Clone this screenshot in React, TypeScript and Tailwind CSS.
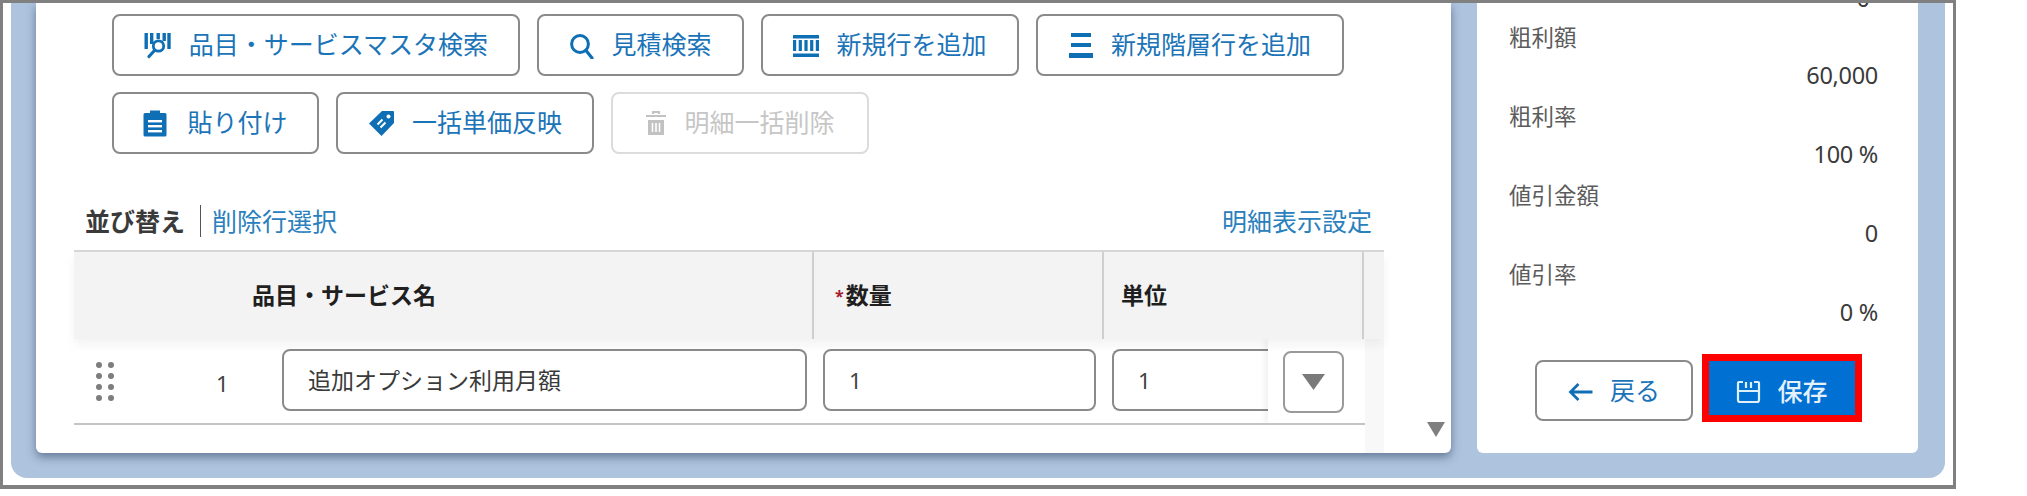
import React from "react";

const blue = "#0f6fb5";

function IconCatalog() {
  return (
    <svg width="27" height="28" viewBox="0 0 27 28" className="shrink-0">
      <g fill={blue}>
        <rect x="0.5" y="2" width="3.4" height="16" />
        <rect x="6" y="2" width="3.4" height="11" />
        <rect x="12.5" y="2" width="3.4" height="6" />
        <rect x="18.5" y="2" width="3.4" height="8" />
        <rect x="23.3" y="2" width="3.4" height="16" />
      </g>
      <circle cx="14.5" cy="15" r="5.2" fill="none" stroke={blue} strokeWidth="2.8" />
      <path d="M10.5 19.5 L5 25.5" stroke={blue} strokeWidth="3.2" strokeLinecap="round" />
    </svg>
  );
}
function IconSearch() {
  return (
    <svg width="25" height="27" viewBox="0 0 25 27" className="shrink-0">
      <circle cx="11" cy="12" r="8.4" fill="none" stroke={blue} strokeWidth="3" />
      <path d="M17 18.5 L23 26" stroke={blue} strokeWidth="3.2" strokeLinecap="round" />
    </svg>
  );
}
function IconRow() {
  return (
    <svg width="26" height="26" viewBox="0 0 26 26" className="shrink-0">
      <g fill={blue}>
        <rect x="0" y="3" width="26" height="3.5" />
        <rect x="0" y="8" width="3.2" height="11" />
        <rect x="5.7" y="8" width="3.2" height="11" />
        <rect x="11.4" y="8" width="3.2" height="11" />
        <rect x="17.1" y="8" width="3.2" height="11" />
        <rect x="22.8" y="8" width="3.2" height="11" />
        <rect x="0" y="21.5" width="26" height="3.5" />
      </g>
    </svg>
  );
}
function IconLayers() {
  return (
    <svg width="25" height="30" viewBox="0 0 25 30" className="shrink-0">
      <g fill={blue}>
        <rect x="2" y="3" width="20" height="4" />
        <rect x="2" y="13" width="20" height="4" />
        <rect x="0" y="23" width="24" height="5" />
      </g>
    </svg>
  );
}
function IconClipboard() {
  return (
    <svg width="24" height="28" viewBox="0 0 24 28" className="shrink-0">
      <path d="M2 4 H7 V1.5 H17 V4 H22 Q23.5 4 23.5 5.5 V26 Q23.5 27.5 22 27.5 H2 Q0.5 27.5 0.5 26 V5.5 Q0.5 4 2 4 Z" fill={blue} />
      <rect x="5" y="11" width="14" height="2.4" fill="#fff" />
      <rect x="5" y="16" width="14" height="2.4" fill="#fff" />
      <rect x="5" y="21" width="14" height="2.4" fill="#fff" />
    </svg>
  );
}
function IconTag() {
  return (
    <svg width="27" height="27" viewBox="0 0 27 27" className="shrink-0">
      <path d="M14 1 H25 Q26 1 26 2 V13 L13.5 26 L1 13.5 Z" fill={blue} />
      <circle cx="20.5" cy="6.5" r="2" fill="#fff" />
      <path d="M9.5 14.5 L14.5 9.5 M12.5 17.5 L17.5 12.5" stroke="#fff" strokeWidth="2" />
    </svg>
  );
}
function IconTrash() {
  const c = "#c2c2c2";
  return (
    <svg width="22" height="26" viewBox="0 0 22 26" className="shrink-0">
      <path d="M8 4 V2 H14 V4 M1 6 H21" stroke={c} strokeWidth="2" fill="none" />
      <path d="M3 10 H19 V25 H3 Z" fill={c} />
      <path d="M7.5 13 V22 M11 13 V22 M14.5 13 V22" stroke="#fff" strokeWidth="1.6" />
    </svg>
  );
}
function IconBack() {
  return (
    <svg width="25" height="22" viewBox="0 0 25 22" className="shrink-0 mt-[3px]">
      <path d="M24.5 11 H3 M10.5 3 L2.5 11 L10.5 19" fill="none" stroke={blue} strokeWidth="2.8" />
    </svg>
  );
}
function IconSave() {
  return (
    <svg width="25" height="24" viewBox="0 0 25 24" className="shrink-0">
      <path d="M7 2 H3 Q2 2 2 3 V20 Q2 22 4 22 H21 Q23 22 23 20 V3 Q23 2 22 2 H18 M10 2 V8 M15 2 V8 M2 11 H23" fill="none" stroke="#dff0fb" strokeWidth="2.2" />
    </svg>
  );
}

function ToolButton({
  w,
  gap,
  icon,
  label,
  disabled,
}: {
  w: string;
  gap: string;
  icon: React.ReactNode;
  label: string;
  disabled?: boolean;
}) {
  return (
    <div
      className={`${w} ${gap} h-[62px] flex items-center justify-center rounded-[8px] border-2 bg-white text-[25px] ${
        disabled ? "border-[#dcdcdc] text-[#c6c6c6]" : "border-[#8a8a8a] text-[#1b74b8]"
      }`}
    >
      {icon}
      <span className="whitespace-nowrap">{label}</span>
    </div>
  );
}

function InfoBlock({ label, value }: { label: string; value: string }) {
  return (
    <div className="h-[79px] shrink-0">
      <div className="h-[38px] leading-[38px] text-[22.5px] text-[#5c5c5c] pl-[32px]">{label}</div>
      <div className="h-[41px] leading-[37px] text-[23.5px] tracking-[-0.3px] text-[#3a3a3a] text-right pr-[40px]">{value}</div>
    </div>
  );
}

function Handle() {
  return (
    <div className="w-[18px] grid grid-cols-2 gap-x-[6px] gap-y-[5px] shrink-0 mt-[23px] -mr-[2px]">
      {Array.from({ length: 8 }).map((_, i) => (
        <span key={i} className="block w-[6px] h-[6px] rounded-full bg-[#7d7d7d]" />
      ))}
    </div>
  );
}

export default function App() {
  return (
    <div className="w-[2027px] h-[496px] bg-white overflow-hidden font-['Noto_Sans','Noto_Sans_CJK_JP',sans-serif]">
      <div className="w-[1956px] h-[489px] border-[3px] border-b-4 border-[#808080] border-t-[3px] bg-white pl-[8px] pr-[8px] pb-[7px] overflow-hidden">
        <div className="h-full bg-[#aec3de] rounded-b-[16px] pl-[25px] pr-[25px] pb-[25px] flex gap-[26px]">
          {/* Left card */}
          <div className="w-[1415px] h-full bg-white rounded-b-[6px] shadow-[0_4px_10px_rgba(50,70,100,0.6)] flex overflow-hidden">
            <div className="w-[1348px] shrink-0 flex flex-col">
              <div className="pl-[76px] pt-[11px] flex flex-col gap-[16px]">
                <div className="flex gap-[17px]">
                  <ToolButton w="w-[408px]" gap="gap-[18px]" icon={<IconCatalog />} label="品目・サービスマスタ検索" />
                  <ToolButton w="w-[207px]" gap="gap-[17px]" icon={<IconSearch />} label="見積検索" />
                  <ToolButton w="w-[258px]" gap="gap-[17px]" icon={<IconRow />} label="新規行を追加" />
                  <ToolButton w="w-[308px]" gap="gap-[17px]" icon={<IconLayers />} label="新規階層行を追加" />
                </div>
                <div className="flex gap-[17px]">
                  <ToolButton w="w-[207px]" gap="gap-[20px]" icon={<IconClipboard />} label="貼り付け" />
                  <ToolButton w="w-[258px]" gap="gap-[17px]" icon={<IconTag />} label="一括単価反映" />
                  <ToolButton w="w-[258px]" gap="gap-[17px]" icon={<IconTrash />} label="明細一括削除" disabled />
                </div>
              </div>

              <div className="mt-[51px] ml-[49px] w-[1287px] h-[32px] flex items-center justify-between text-[25px] leading-[32px]">
                <div className="flex items-center">
                  <span className="font-bold text-[#3a3a3a] border-r border-[#555] h-[32px] w-[116px] whitespace-nowrap">並び替え</span>
                  <span className="pl-[11px] text-[#2a80bd] whitespace-nowrap">削除行選択</span>
                </div>
                <span className="text-[#2a80bd] whitespace-nowrap">明細表示設定</span>
              </div>

              <div className="mt-[13px] ml-[38px] w-[1310px] flex-1 flex flex-col border-t-2 border-[#d6d6d6] min-h-0">
                <div className="relative z-10 h-[87px] bg-[#f3f3f3] shadow-[0_6px_10px_rgba(0,0,0,0.05)] grid grid-cols-[738px_290px_260px_22px] text-[23px] font-bold text-[#1f1f1f] shrink-0">
                  <div className="pl-[178px] flex items-center whitespace-nowrap">品目・サービス名</div>
                  <div className="border-l-2 border-[#cfcfcf] pl-[21px] flex items-center whitespace-nowrap">
                    <span className="text-[#a61a2e] text-[16px] mr-[2px]">*</span>数量
                  </div>
                  <div className="border-l-2 border-[#cfcfcf] pl-[17px] flex items-center whitespace-nowrap">単位</div>
                  <div className="border-l-2 border-[#cfcfcf]" />
                </div>
                <div className="flex-1 flex min-h-0">
                  <div className="w-[1291px] shrink-0">
                    <div className="h-[86px] border-b-2 border-[#c4c4c4] flex items-start overflow-hidden pl-[22px]">
                      <Handle />
                      <div className="w-[170px] shrink-0 pl-[104px] mt-[14px] h-[62px] flex items-center text-[22.5px] text-[#444]">1</div>
                      <div className="mt-[10px] w-[525px] h-[62px] shrink-0 rounded-[8px] border-2 border-[#8a8a8a] pl-[24px] flex items-center text-[23px] text-[#3a3a3a] whitespace-nowrap">
                        追加オプション利用月額
                      </div>
                      <div className="mt-[10px] ml-[16px] w-[273px] h-[62px] shrink-0 rounded-[8px] border-2 border-[#8a8a8a] pl-[24px] pt-[1px] flex items-center text-[22.5px] text-[#444]">
                        1
                      </div>
                      <div className="mt-[10px] ml-[16px] w-[156px] h-[62px] shrink-0 rounded-l-[8px] border-2 border-r-0 border-[#8a8a8a] pl-[24px] pt-[1px] flex items-center text-[22.5px] text-[#444]">
                        1
                      </div>
                      <div className="w-[97px] h-[84px] shrink-0 bg-white pl-[15px] pt-[12px] shadow-[-4px_0_6px_rgba(0,0,0,0.05)]">
                        <div className="w-[61px] h-[62px] rounded-[8px] border-2 border-[#9a9a9a] flex items-center justify-center">
                          <svg width="23" height="16" viewBox="0 0 23 16">
                            <path d="M0 0 H23 L11.5 16 Z" fill="#7a7a7a" />
                          </svg>
                        </div>
                      </div>
                    </div>
                  </div>
                  <div className="w-[19px] shrink-0 bg-[#f8f8f8]" />
                </div>
              </div>
            </div>
            <div className="flex-1 flex flex-col justify-end items-center pb-[16px] pl-[36px]">
              <svg width="18" height="15" viewBox="0 0 18 15">
                <path d="M0 0 H18 L9 15 Z" fill="#7f7f7f" />
              </svg>
            </div>
          </div>

          {/* Right panel */}
          <div className="w-[441px] h-full bg-white rounded-b-[6px] flex flex-col overflow-hidden">
            <div className="-mt-[24px] mb-[2px] h-[38px] leading-[38px] text-[23.5px] text-[#3a3a3a] text-right pr-[48px] shrink-0">0</div>
            <InfoBlock label="粗利額" value="60,000" />
            <InfoBlock label="粗利率" value="100 %" />
            <InfoBlock label="値引金額" value="0" />
            <InfoBlock label="値引率" value="0 %" />
            <div className="mt-[19px] pl-[58px] flex gap-[9px] items-start">
              <div className="mt-[6px] w-[158px] h-[61px] rounded-[8px] border-2 border-[#8a8a8a] flex items-center justify-center gap-[17px] text-[25px] text-[#1b74b8]">
                <IconBack />
                <span>戻る</span>
              </div>
              <div className="w-[160px] h-[68px] border-[7px] border-[#ff0000] bg-[#0070d2] pt-[7px] flex items-center justify-center gap-[16px] text-[25px] font-medium text-[#e4f1fb]">
                <IconSave />
                <span>保存</span>
              </div>
            </div>
          </div>
        </div>
      </div>
    </div>
  );
}
